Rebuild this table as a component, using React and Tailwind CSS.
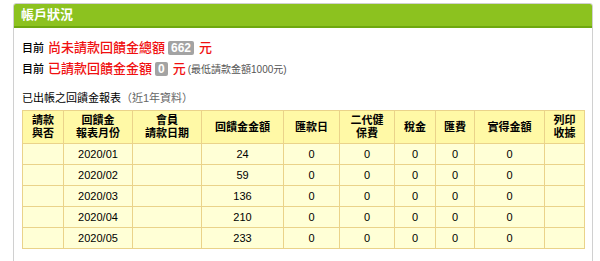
import React from "react";

const cols = [41, 69, 69, 82, 56, 55, 41, 39, 70, 40];
const heads = [
  ["請款", "與否"],
  ["回饋金", "報表月份"],
  ["會員", "請款日期"],
  ["回饋金金額"],
  ["匯款日"],
  ["二代健", "保費"],
  ["稅金"],
  ["匯費"],
  ["實得金額"],
  ["列印", "收據"],
];
const rows = [
  ["2020/01", "24"],
  ["2020/02", "59"],
  ["2020/03", "136"],
  ["2020/04", "210"],
  ["2020/05", "233"],
];

export default function App() {
  return (
    <div
      className="w-[600px] h-[261px] bg-white overflow-hidden pt-[3px] pl-[13px]"
      style={{ fontFamily: '"Liberation Sans", Arial, "Noto Sans CJK TC", sans-serif' }}
    >
      <div className="w-[580px] h-[300px] border border-[#d0d0d0] rounded-t-[3px]">
        <div className="h-[24px] bg-[#8cc21f] border-b-2 border-[#6ea80f] rounded-t-[2px] flex items-center pl-[7px] text-white font-bold text-[13px]">
          帳戶狀況
        </div>
        <div className="px-[8px]">
          <div className="mt-[11px] flex items-center h-[18px] text-[11px] text-black">
            <span className="font-medium">目前</span>
            <span className="ml-[4px] text-[13px] font-medium text-[#f01010]">尚未請款回饋金總額</span>
            <span className="ml-[3px] bg-[#a3a3a3] text-white font-bold text-[12px] leading-[14px] px-[3px] rounded-[2px]">662</span>
            <span className="ml-[5px] text-[13px] font-medium text-[#f01010]">元</span>
          </div>
          <div className="mt-[3px] flex items-center h-[18px] text-[11px] text-black">
            <span className="font-medium">目前</span>
            <span className="ml-[4px] text-[13px] font-medium text-[#f01010]">已請款回饋金金額</span>
            <span className="ml-[3px] bg-[#a3a3a3] text-white font-bold text-[12px] leading-[14px] px-[3px] rounded-[2px]">0</span>
            <span className="ml-[5px] text-[13px] font-medium text-[#f01010]">元</span>
            <span className="ml-[2px] text-[10px] text-[#555]">(最低請款金額1000元)</span>
          </div>
          <div className="mt-[13px] h-[14px] flex items-center text-[11px] text-black">
            已出帳之回饋金報表<span className="text-[#666]">（近1年資料）</span>
          </div>
          <table className="mt-[5px] border-collapse text-[11px] text-black table-fixed w-[562px]">
            <colgroup>
              {cols.map((w, i) => (
                <col key={i} style={{ width: w }} />
              ))}
            </colgroup>
            <thead>
              <tr className="h-[33px] bg-[#fff9a6]">
                {heads.map((h, i) => (
                  <th key={i} className="border border-[#ead38a] font-bold leading-[13px] text-center align-middle p-0">
                    {h.map((l, j) => (
                      <div key={j}>{l}</div>
                    ))}
                  </th>
                ))}
              </tr>
            </thead>
            <tbody>
              {rows.map((r) => (
                <tr key={r[0]} className="h-[21px] bg-[#ffffd6]">
                  <td className="border border-[#ead38a]"></td>
                  <td className="border border-[#ead38a] text-center">{r[0]}</td>
                  <td className="border border-[#ead38a]"></td>
                  <td className="border border-[#ead38a] text-center">{r[1]}</td>
                  <td className="border border-[#ead38a] text-center">0</td>
                  <td className="border border-[#ead38a] text-center">0</td>
                  <td className="border border-[#ead38a] text-center">0</td>
                  <td className="border border-[#ead38a] text-center">0</td>
                  <td className="border border-[#ead38a] text-center">0</td>
                  <td className="border border-[#ead38a]"></td>
                </tr>
              ))}
            </tbody>
          </table>
        </div>
      </div>
    </div>
  );
}
